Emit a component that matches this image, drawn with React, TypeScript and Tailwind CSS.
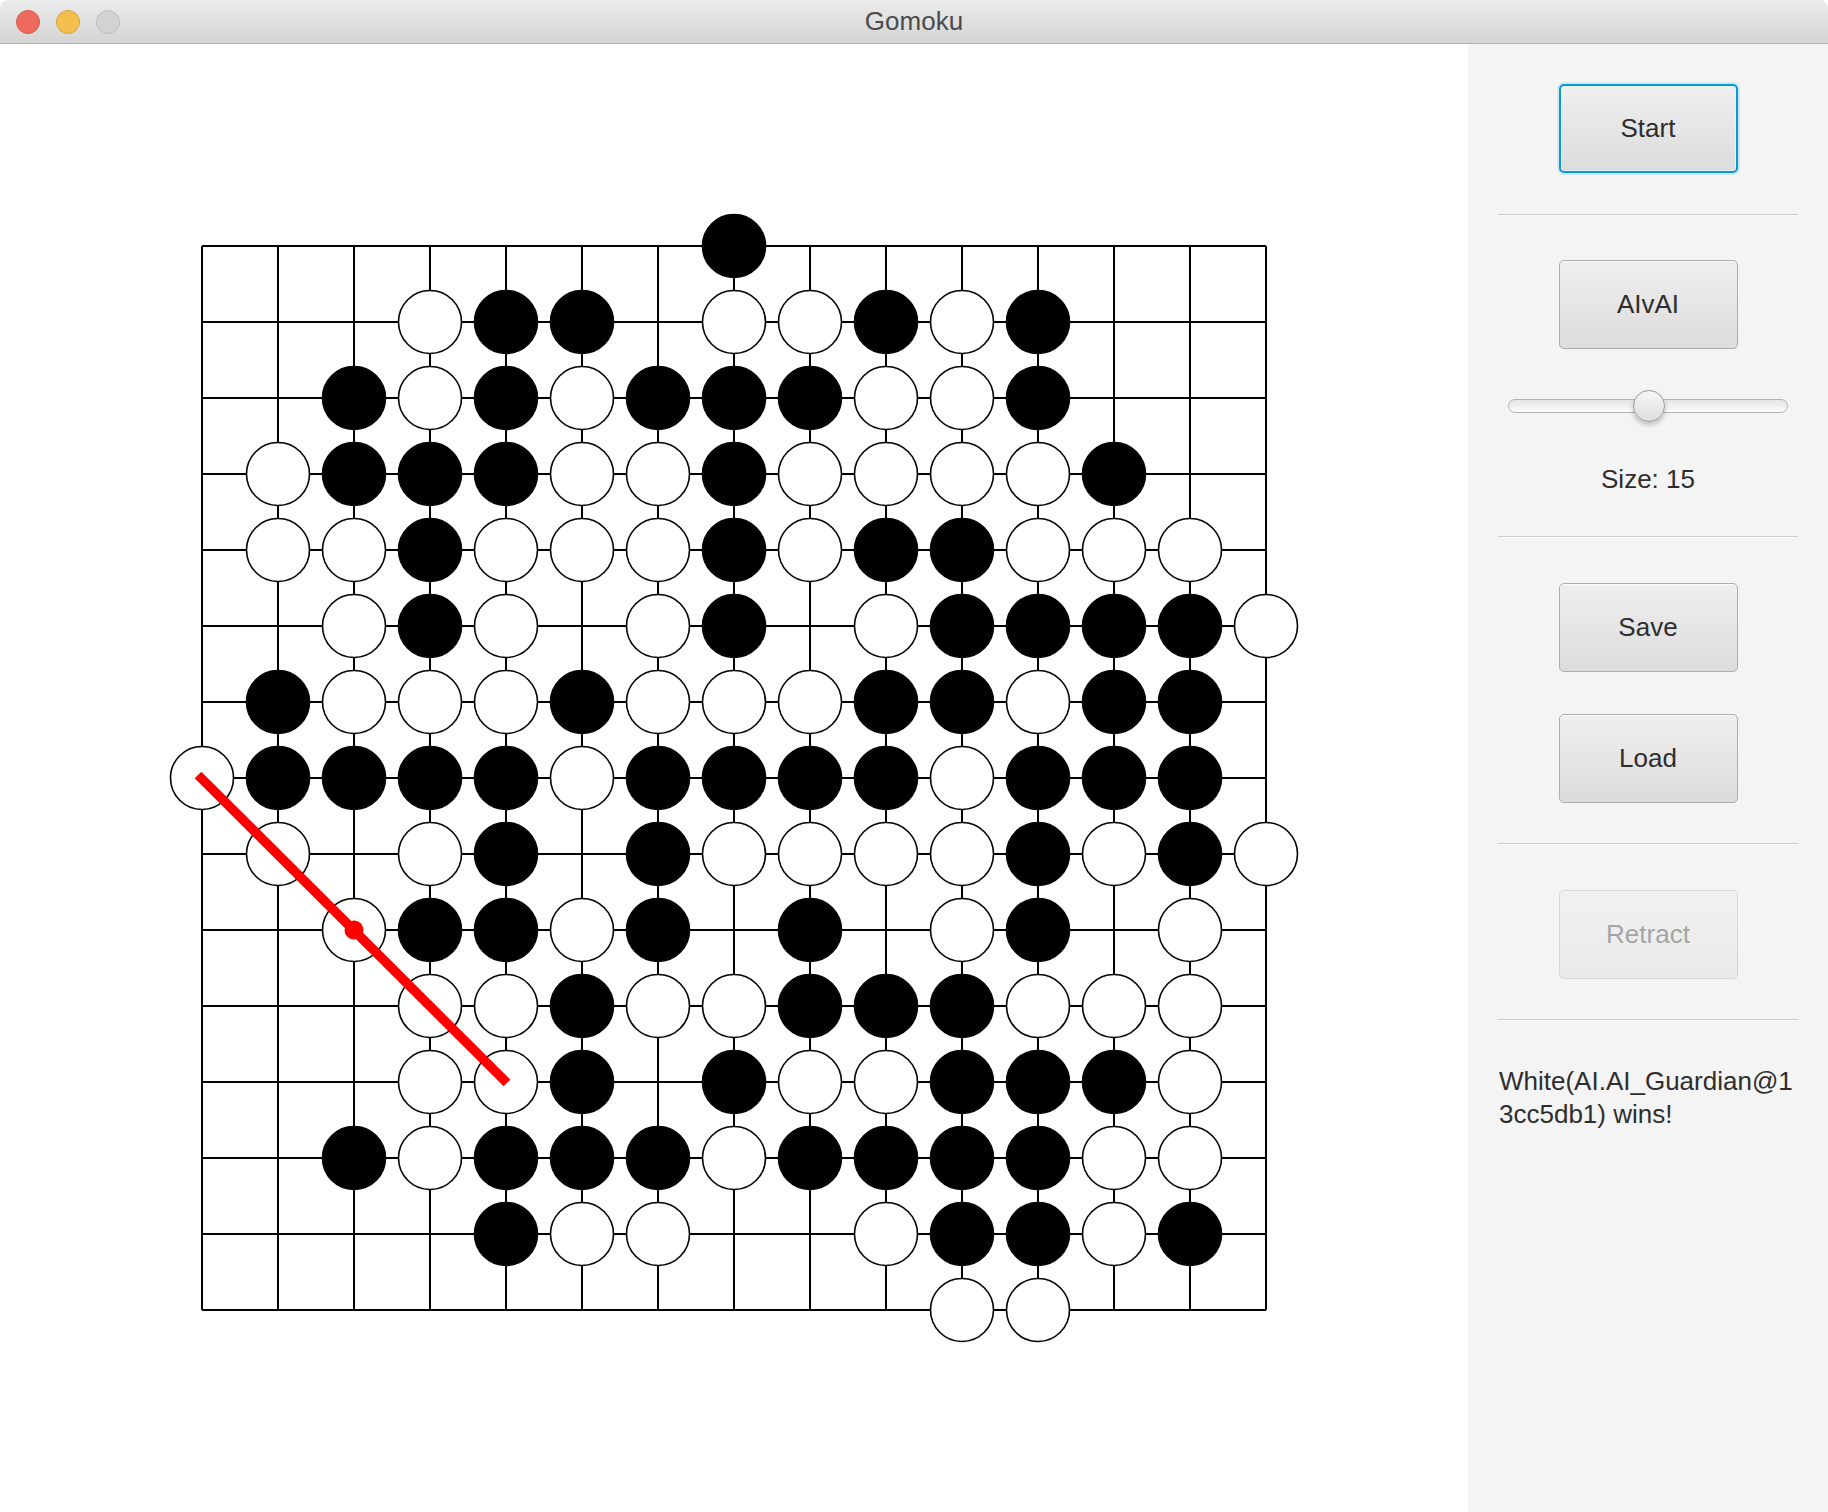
import React from 'react';
import clsx from 'clsx';

// 15x15 board: B = black, W = white, . = empty
const BOARD = [
    '.......B.......',
    '...WBB.WWBWB...',
    '..BWBWBBBWWB...',
    '.WBBBWWBWWWWB..',
    '.WWBWWWBWBBWWW.',
    '..WBW.WB.WBBBBW',
    '.BWWWBWWWBBWBB.',
    'WBBBBWBBBBWBBB.',
    '.W.WB.BWWWWBWBW',
    '..WBBWB.B.WB.W.',
    '...WWBWWBBBWWW.',
    '...WWB.BWWBBBW.',
    '..BWBBBWBBBBWW.',
    '....BWW..WBBWB.',
    '..........WW...',
];

const ORIGIN = 202;
const STEP = 76;
const LAST = ORIGIN + STEP * 14;

const Board = () => (
    <svg width={1468} height={1468} viewBox="0 0 1468 1468" xmlns="http://www.w3.org/2000/svg">
        {/* grid */}
        {Array.from({ length: 15 }).map((_, i) => (
            <g key={i} stroke="#000" strokeWidth={2}>
                <line x1={ORIGIN} y1={ORIGIN + i * STEP} x2={LAST} y2={ORIGIN + i * STEP} />
                <line x1={ORIGIN + i * STEP} y1={ORIGIN} x2={ORIGIN + i * STEP} y2={LAST} />
            </g>
        ))}
        {/* stones */}
        {BOARD.map((row, r) =>
            row.split('').map((c, col) =>
                c === '.' ? null : (
                    <circle
                        key={`${r}-${col}`}
                        cx={ORIGIN + col * STEP}
                        cy={ORIGIN + r * STEP}
                        r={31.5}
                        fill={c === 'B' ? '#000' : '#fff'}
                        stroke="#000"
                        strokeWidth={1.6}
                    />
                )
            )
        )}
        {/* winning line */}
        <line x1={198} y1={731} x2={507} y2={1039} stroke="#ff0000" strokeWidth={9.5} />
        <circle cx={354} cy={886} r={9.5} fill="#ff0000" />
    </svg>
);

const Button = ({ label, focused, disabled }: { label: string; focused?: boolean; disabled?: boolean }) => (
    <button
        className={clsx(
            'w-[179px] h-[89px] rounded-[5px] bg-linear-to-b from-[#efefef] to-[#dcdcdc] text-[26px] text-[#2e2e2e]',
            focused
                ? 'border-2 border-[#0b99d4] shadow-[0_0_0_2px_#cfe8f3,inset_0_0_0_1px_#e4f1f7]'
                : 'border-[1.5px] border-[#adadad] shadow-[inset_0_1px_0_#fafafa]',
            disabled && 'opacity-40'
        )}
    >
        {label}
    </button>
);

const Separator = ({ className }: { className?: string }) => (
    <div className={clsx('w-[300px] border-t border-b border-t-[#cccccc] border-b-[#fbfbfb]', className)} />
);

export default function App() {
    return (
        <div className="w-[1828px] h-[1512px] bg-white font-['Liberation_Sans',Arial,sans-serif] overflow-hidden">
            {/* title bar */}
            <div className="h-[44px] grid grid-cols-[1fr_auto_1fr] items-center rounded-t-[8px] border-b border-[#b3b3b3] bg-linear-to-b from-[#ececec] to-[#d4d4d4]">
                <div className="flex items-center gap-[16px] pl-[16px]">
                    <span className="w-[24px] h-[24px] rounded-full bg-[#ee6a5f] border border-[#d65a4f]" />
                    <span className="w-[24px] h-[24px] rounded-full bg-[#f5bf4f] border border-[#d9a13e]" />
                    <span className="w-[24px] h-[24px] rounded-full bg-[#d2d2d2] border border-[#bdbdbd]" />
                </div>
                <div className="text-[26px] text-[#4b4b4b]">Gomoku</div>
                <div />
            </div>

            <div className="flex h-[1468px]">
                {/* board */}
                <div className="w-[1468px] bg-white">
                    <Board />
                </div>

                {/* side panel */}
                <div className="w-[360px] bg-[#f4f4f4] flex flex-col items-center">
                    <div className="mt-[40px]">
                        <Button label="Start" focused />
                    </div>
                    <Separator className="mt-[41px]" />
                    <div className="mt-[44px]">
                        <Button label="AIvAI" />
                    </div>
                    <div className="relative mt-[41px] w-[280px] h-[32px] flex items-center">
                        <div className="w-full h-[14px] rounded-full border border-[#b5b5b5] bg-linear-to-b from-[#e4e4e4] to-[#fbfbfb]" />
                        <div className="absolute left-[125px] top-0 w-[32px] h-[32px] rounded-full border-[1.5px] border-[#9c9c9c] bg-linear-to-b from-[#f7f7f7] to-[#dddddd] shadow-[0_3px_5px_rgba(0,0,0,0.22)]" />
                    </div>
                    <div className="mt-[42px] h-[30px] leading-[30px] text-[26px] text-[#2e2e2e]">Size: 15</div>
                    <Separator className="mt-[42px]" />
                    <div className="mt-[45px]">
                        <Button label="Save" />
                    </div>
                    <div className="mt-[42px]">
                        <Button label="Load" />
                    </div>
                    <Separator className="mt-[40px]" />
                    <div className="mt-[45px]">
                        <Button label="Retract" disabled />
                    </div>
                    <Separator className="mt-[40px]" />
                    <div className="self-start pl-[31px] mt-[44px] text-[26px] leading-[33px] text-[#2e2e2e]">
                        White(AI.AI_Guardian@1
                        <br />
                        3cc5db1) wins!
                    </div>
                </div>
            </div>
        </div>
    );
}
